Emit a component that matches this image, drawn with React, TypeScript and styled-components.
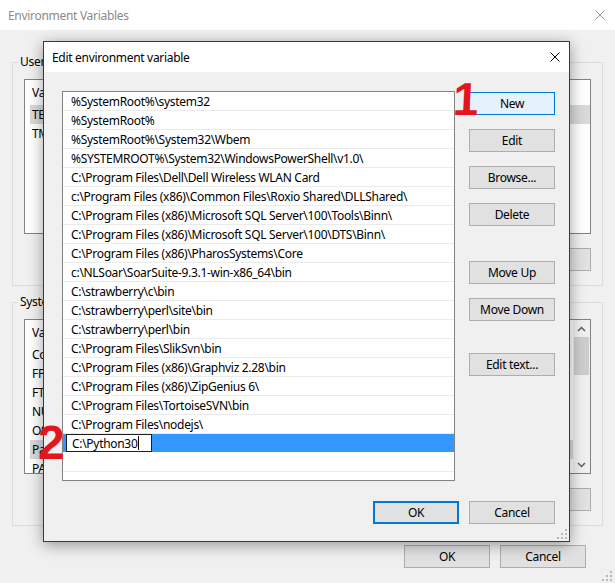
import React from "react";
import styled, { createGlobalStyle } from "styled-components";

const GlobalStyle = createGlobalStyle`
  html, body { margin: 0; padding: 0; }
  body {
    width: 615px; height: 583px; overflow: hidden; background: #f0f0f0;
    font-family: "Noto Sans", "Open Sans", sans-serif; font-size: 12px; color: #000;
    letter-spacing: -0.3px;
  }
  * { box-sizing: border-box; }
`;

const Screen = styled.div`
  position: relative;
  width: 615px;
  height: 583px;
  overflow: hidden;
`;

const Window = styled.div`
  position: relative;
  display: flex;
  flex-direction: column;
  width: 615px;
  height: 583px;
  background: #f0f0f0;
`;

const TitleBar = styled.div<{ $active?: boolean }>`
  height: 30px;
  flex: none;
  display: flex;
  align-items: center;
  justify-content: space-between;
  background: #fff;
  padding-left: 8px;
  padding-right: ${(p) => (p.$active ? 0 : 1)}px;
  color: ${(p) => (p.$active ? "#000" : "#8a8a8a")};
  font-size: 12px;
`;

const TitleText = styled.span`
  white-space: nowrap;
`;

const CloseBox = styled.div`
  width: 28px;
  height: 30px;
  display: flex;
  align-items: center;
  justify-content: center;
`;

const WindowBody = styled.div`
  flex: 1;
  display: flex;
  flex-direction: column;
  padding: 24px 12px 0 12px;
`;

const GroupBox = styled.fieldset<{ $gap?: number }>`
  margin: ${(p) => p.$gap ?? 0}px 0 0 0;
  padding: 0;
  border: 1px solid #dcdcdc;
  min-width: 0;
`;

const GroupLegend = styled.legend`
  margin-left: 5px;
  padding: 0 2px;
  line-height: 16px;
  font-size: 12px;
`;

const GroupContent = styled.div`
  display: flex;
  flex-direction: column;
  padding: 9px 11px 14px 11px;
`;

const ListView = styled.div`
  height: 155px;
  background: #fff;
  border: 1px solid #828282;
  display: flex;
  overflow: hidden;
`;

const ListColumns = styled.div`
  flex: 1;
  min-width: 0;
  display: flex;
  flex-direction: column;
`;

const ListHeader = styled.div`
  height: 25px;
  flex: none;
  display: flex;
  align-items: center;
  padding-left: 7px;
`;

const ListRow = styled.div<{ $selected?: boolean }>`
  height: 19px;
  flex: none;
  display: flex;
  align-items: center;
  margin-left: 5px;
  padding-left: 2px;
  background: ${(p) => (p.$selected ? "#d9d9d9" : "transparent")};
  white-space: nowrap;
`;

const NameCell = styled.div`
  width: 170px;
  flex: none;
  overflow: hidden;
`;

const ScrollBar = styled.div`
  width: 17px;
  flex: none;
  background: #f0f0f0;
  display: flex;
  flex-direction: column;
  align-items: center;
`;

const ScrollArrow = styled.div`
  width: 17px;
  height: 17px;
  flex: none;
  display: flex;
  align-items: center;
  justify-content: center;
`;

const ScrollThumb = styled.div`
  width: 15px;
  height: 38px;
  flex: none;
  background: #cdcdcd;
`;

const ScrollTrack = styled.div`
  flex: 1;
`;

const ButtonRow = styled.div<{ $top: number; $right?: number }>`
  display: flex;
  justify-content: flex-end;
  gap: 10px;
  margin-top: ${(p) => p.$top}px;
  margin-right: ${(p) => p.$right ?? 0}px;
`;

const Button = styled.div<{ $variant?: "default" | "hot"; $top?: number }>`
  width: 86px;
  height: 23px;
  flex: none;
  display: flex;
  align-items: center;
  justify-content: center;
  margin-top: ${(p) => p.$top ?? 0}px;
  font-size: 12px;
  color: #000;
  background: ${(p) => (p.$variant === "hot" ? "#e5f1fb" : "#e1e1e1")};
  border: 1px solid ${(p) => (p.$variant ? "#0078d7" : "#adadad")};
  box-shadow: ${(p) => (p.$variant === "default" ? "inset 0 0 0 1px #0078d7" : "none")};
  white-space: nowrap;
`;

const Grip = styled.svg<{ $right: number; $bottom: number }>`
  position: absolute;
  right: ${(p) => p.$right}px;
  bottom: ${(p) => p.$bottom}px;
`;

/* ---------- Edit dialog ---------- */

const Dialog = styled.div`
  position: absolute;
  left: 43px;
  top: 41px;
  width: 527px;
  height: 501px;
  border: 1px solid #3a3a3a;
  background: #f0f0f0;
  display: flex;
  flex-direction: column;
  box-shadow: 0 3px 14px rgba(0, 0, 0, 0.38);
`;

const DialogBody = styled.div`
  flex: 1;
  display: grid;
  grid-template-columns: 393px 86px;
  grid-template-rows: 390px auto;
  column-gap: 14px;
  row-gap: 20px;
  padding: 19px 14px 17px 18px;
`;

const PathList = styled.div`
  background: #fff;
  border: 1px solid #828282;
  display: flex;
  flex-direction: column;
  overflow: hidden;
`;

const PathRow = styled.div<{ $selected?: boolean }>`
  height: 19px;
  flex: none;
  display: flex;
  align-items: center;
  padding-left: ${(p) => (p.$selected ? 3 : 8)}px;
  background: ${(p) => (p.$selected ? "#3399ff" : "#fff")};
  border-bottom: 1px solid ${(p) => (p.$selected ? "#fff" : "#ebebeb")};
  white-space: nowrap;
`;

const EditBox = styled.div`
  width: 86px;
  height: 18px;
  background: #fff;
  border: 1px solid #1e1e1e;
  padding-left: 5px;
  display: flex;
  align-items: center;
`;

const Caret = styled.span`
  display: inline-block;
  width: 1px;
  height: 14px;
  background: #000;
`;

const ButtonColumn = styled.div`
  display: flex;
  flex-direction: column;
  gap: 14px;
  padding-top: 1px;
`;

const DialogFooter = styled.div`
  grid-column: 1 / span 2;
  display: flex;
  justify-content: flex-end;
  gap: 10px;
`;

const Annotation = styled.span<{ $x: number; $y: number; $size: number; $skew?: number }>`
  position: absolute;
  left: ${(p) => p.$x}px;
  top: ${(p) => p.$y}px;
  font-family: "Liberation Sans", Arial, sans-serif;
  font-weight: 700;
  font-size: ${(p) => p.$size}px;
  letter-spacing: 0;
  line-height: 1;
  color: #e3161e;
  transform: skewX(${(p) => p.$skew ?? 0}deg);
`;

const CloseIcon = ({ color }: { color: string }) => (
  <svg width="10" height="10" viewBox="0 0 10 10">
    <path d="M0.5 0.5 L9.5 9.5 M9.5 0.5 L0.5 9.5" stroke={color} strokeWidth="1" fill="none" />
  </svg>
);

const Chevron = ({ up }: { up?: boolean }) => (
  <svg width="9" height="6" viewBox="0 0 9 6">
    <polyline
      points={up ? "1,5 4.5,1.5 8,5" : "1,1 4.5,4.5 8,1"}
      stroke="#606060"
      strokeWidth="1.5"
      fill="none"
    />
  </svg>
);

const GripIcon = ({ right, bottom }: { right: number; bottom: number }) => (
  <Grip $right={right} $bottom={bottom} width="10" height="10" viewBox="0 0 10 10">
    {[
      [8, 0],
      [4, 4],
      [8, 4],
      [0, 8],
      [4, 8],
      [8, 8],
    ].map(([x, y], i) => (
      <rect key={i} x={x} y={y} width="2" height="2" fill="#b8b8b8" />
    ))}
  </Grip>
);

const userVars = [
  { name: "TEMP", selected: true },
  { name: "TMP" },
];

const systemVars = [
  { name: "ComSpec" },
  { name: "FP_NO_HOST_CHECK" },
  { name: "FTP_PASSIVE" },
  { name: "NUMBER_OF_PROCESSORS" },
  { name: "OS" },
  { name: "Path", selected: true },
  { name: "PATHEXT" },
];

const paths = [
  "%SystemRoot%\\system32",
  "%SystemRoot%",
  "%SystemRoot%\\System32\\Wbem",
  "%SYSTEMROOT%\\System32\\WindowsPowerShell\\v1.0\\",
  "C:\\Program Files\\Dell\\Dell Wireless WLAN Card",
  "c:\\Program Files (x86)\\Common Files\\Roxio Shared\\DLLShared\\",
  "C:\\Program Files (x86)\\Microsoft SQL Server\\100\\Tools\\Binn\\",
  "C:\\Program Files (x86)\\Microsoft SQL Server\\100\\DTS\\Binn\\",
  "C:\\Program Files (x86)\\PharosSystems\\Core",
  "c:\\NLSoar\\SoarSuite-9.3.1-win-x86_64\\bin",
  "C:\\strawberry\\c\\bin",
  "C:\\strawberry\\perl\\site\\bin",
  "C:\\strawberry\\perl\\bin",
  "C:\\Program Files\\SlikSvn\\bin",
  "C:\\Program Files (x86)\\Graphviz 2.28\\bin",
  "C:\\Program Files (x86)\\ZipGenius 6\\",
  "C:\\Program Files\\TortoiseSVN\\bin",
  "C:\\Program Files\\nodejs\\",
];

export default function App() {
  return (
    <Screen>
      <GlobalStyle />
      <Window>
        <TitleBar>
          <TitleText>Environment Variables</TitleText>
          <CloseBox>
            <CloseIcon color="#9a9a9a" />
          </CloseBox>
        </TitleBar>
        <WindowBody>
          <GroupBox>
            <GroupLegend>User variables</GroupLegend>
            <GroupContent>
              <ListView>
                <ListColumns>
                  <ListHeader>
                    <NameCell>Variable</NameCell>
                  </ListHeader>
                  {userVars.map((v) => (
                    <ListRow key={v.name} $selected={v.selected}>
                      <NameCell>{v.name}</NameCell>
                    </ListRow>
                  ))}
                </ListColumns>
              </ListView>
              <ButtonRow $top={14}>
                <Button>New...</Button>
                <Button>Edit...</Button>
                <Button>Delete</Button>
              </ButtonRow>
            </GroupContent>
          </GroupBox>
          <GroupBox $gap={8}>
            <GroupLegend>System variables</GroupLegend>
            <GroupContent>
              <ListView>
                <ListColumns>
                  <ListHeader>
                    <NameCell>Variable</NameCell>
                  </ListHeader>
                  {systemVars.map((v) => (
                    <ListRow key={v.name} $selected={v.selected}>
                      <NameCell>{v.name}</NameCell>
                    </ListRow>
                  ))}
                </ListColumns>
                <ScrollBar>
                  <ScrollArrow>
                    <Chevron up />
                  </ScrollArrow>
                  <ScrollThumb />
                  <ScrollTrack />
                  <ScrollArrow>
                    <Chevron />
                  </ScrollArrow>
                </ScrollBar>
              </ListView>
              <ButtonRow $top={14}>
                <Button>New...</Button>
                <Button>Edit...</Button>
                <Button>Delete</Button>
              </ButtonRow>
            </GroupContent>
          </GroupBox>
          <ButtonRow $top={19} $right={17}>
            <Button>OK</Button>
            <Button>Cancel</Button>
          </ButtonRow>
        </WindowBody>
        <GripIcon right={3} bottom={2} />
      </Window>

      <Dialog>
        <TitleBar $active>
          <TitleText>Edit environment variable</TitleText>
          <CloseBox>
            <CloseIcon color="#000" />
          </CloseBox>
        </TitleBar>
        <DialogBody>
          <PathList>
            {paths.map((p) => (
              <PathRow key={p}>{p}</PathRow>
            ))}
            <PathRow $selected>
              <EditBox>
                C:\Python30
                <Caret />
              </EditBox>
            </PathRow>
            <PathRow />
          </PathList>
          <ButtonColumn>
            <Button $variant="hot">New</Button>
            <Button>Edit</Button>
            <Button>Browse...</Button>
            <Button>Delete</Button>
            <Button $top={21}>Move Up</Button>
            <Button>Move Down</Button>
            <Button $top={18}>Edit text...</Button>
          </ButtonColumn>
          <DialogFooter>
            <Button $variant="default">OK</Button>
            <Button>Cancel</Button>
          </DialogFooter>
        </DialogBody>
        <GripIcon right={2} bottom={2} />
      </Dialog>

      <Annotation $x={453} $y={76} $size={46} $skew={-3}>
        1
      </Annotation>
      <Annotation $x={38} $y={419} $size={48}>
        2
      </Annotation>
    </Screen>
  );
}
